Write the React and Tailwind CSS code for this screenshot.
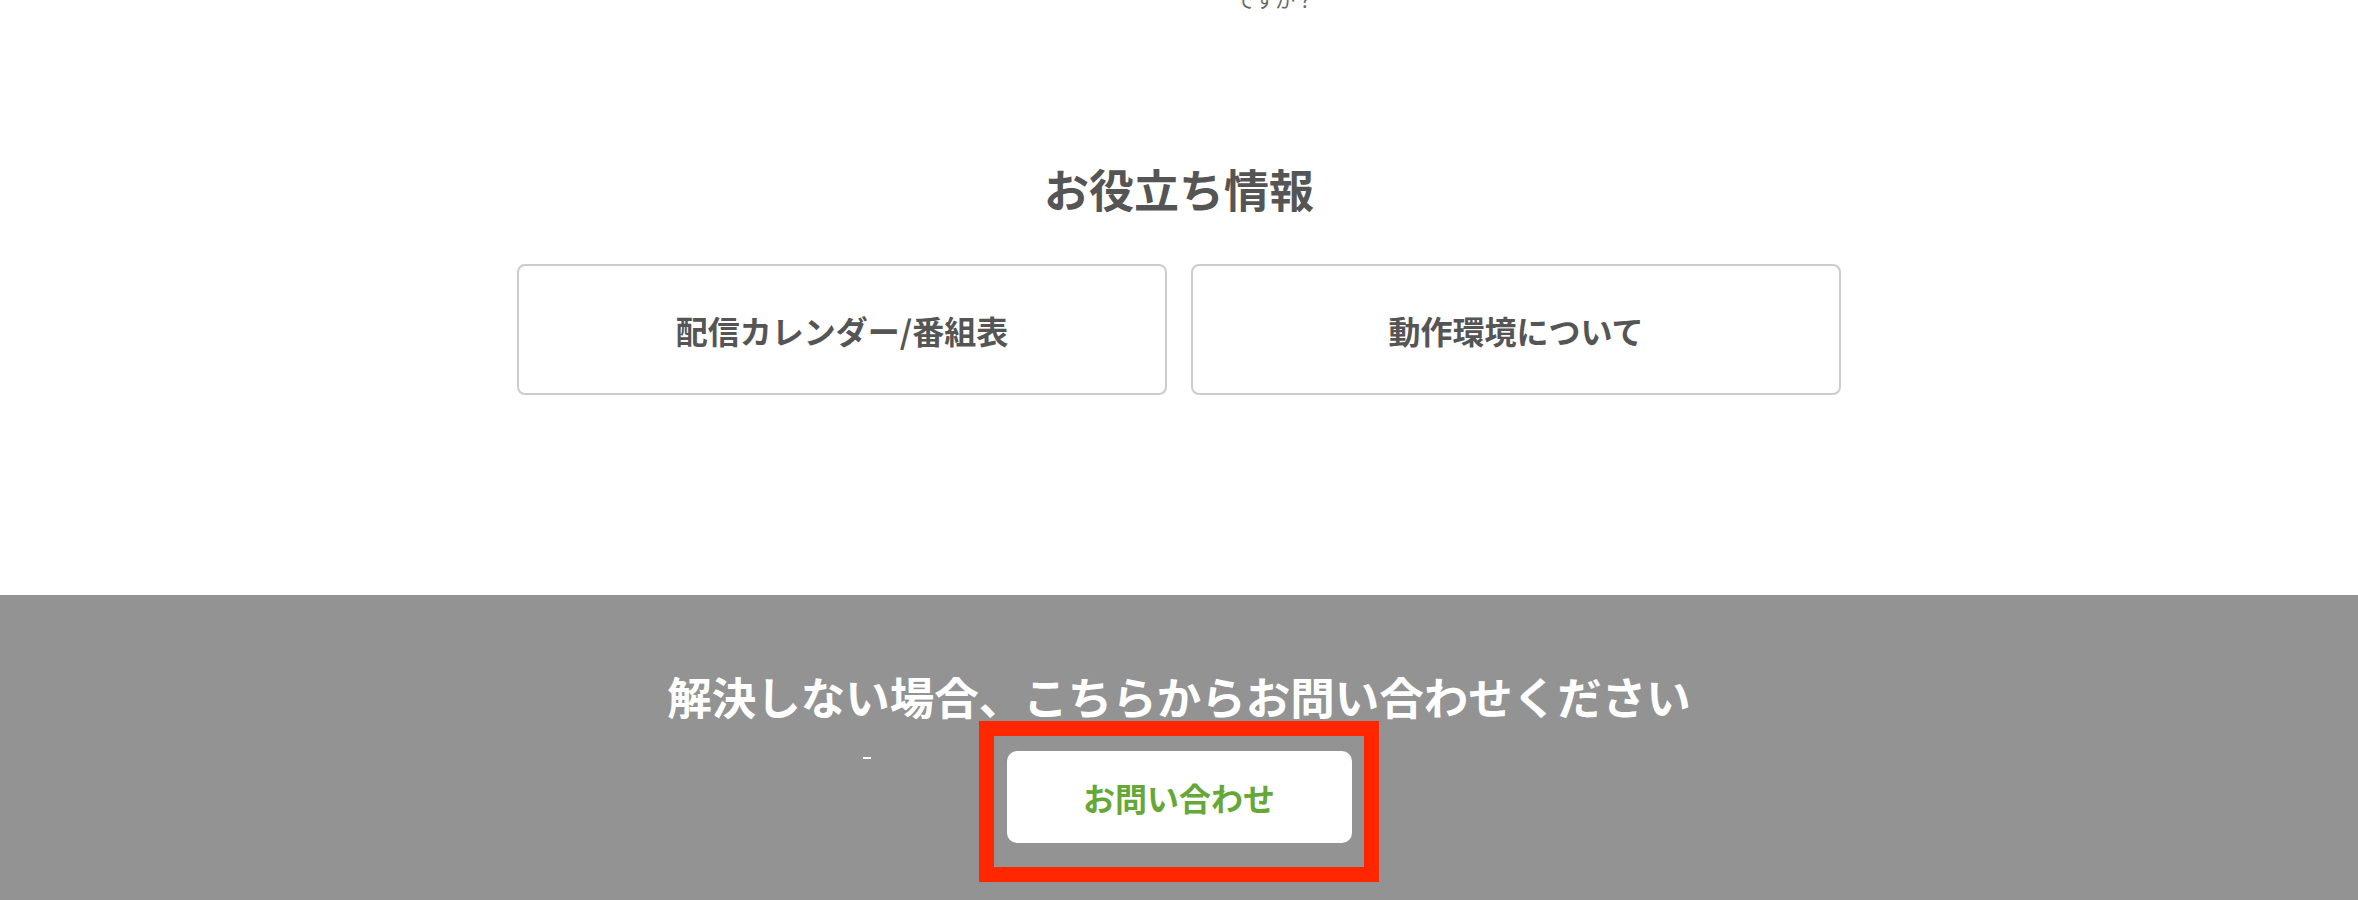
import React from "react";

// Helpful links shown under the FAQ list
const links = [
  { key: "calendar", label: "配信カレンダー/番組表" },
  { key: "env", label: "動作環境について" },
];

const App = () => {
  return (
    <div
      className="w-full min-h-[900px] bg-white overflow-hidden"
      style={{ fontFamily: '"Noto Sans CJK JP", "Noto Sans", sans-serif' }}
    >
      {/* Tail of the previous FAQ item */}
      <div className="mx-auto w-[1324px] -mt-[15px] h-[30px]">
        <p className="pl-[718px] text-[20px] leading-[30px] text-[#666]">ですか？</p>
      </div>

      {/* Useful info */}
      <section className="mx-auto w-[1324px] pt-[151px] pb-[200px]">
        <h2 className="text-center text-[45px] leading-[45px] font-bold text-[#555]">
          お役立ち情報
        </h2>
        <div className="mt-[53px] grid grid-cols-2 gap-[24px]">
          {links.map((link) => (
            <a
              key={link.key}
              href="#"
              className="flex h-[131px] items-center justify-center rounded-[8px] border-2 border-[#cccccc] bg-white text-[32px] font-bold text-[#555]"
            >
              {link.label}
            </a>
          ))}
        </div>
      </section>

      {/* Contact */}
      <section className="bg-[#939393] pt-[78px] pb-[120px]">
        <h2 className="text-center text-[44.5px] leading-[45px] font-bold text-white">
          解決しない場合、こちらからお問い合わせください
        </h2>
        <div className="relative mt-[33px] flex justify-center">
          <span className="absolute left-[863px] top-[6px] h-[2px] w-[8px] bg-white" />
          <div className="relative">
            <a
              href="#"
              className="flex h-[92px] w-[345px] items-center justify-center rounded-[10px] bg-white text-[32px] font-bold text-[#66a838]"
            >
              お問い合わせ
            </a>
            {/* highlight frame */}
            <div className="pointer-events-none absolute -left-[28px] -top-[30px] h-[161px] w-[400px] border-[15px] border-[#ff2600]" />
          </div>
        </div>
      </section>
    </div>
  );
};

export default App;
